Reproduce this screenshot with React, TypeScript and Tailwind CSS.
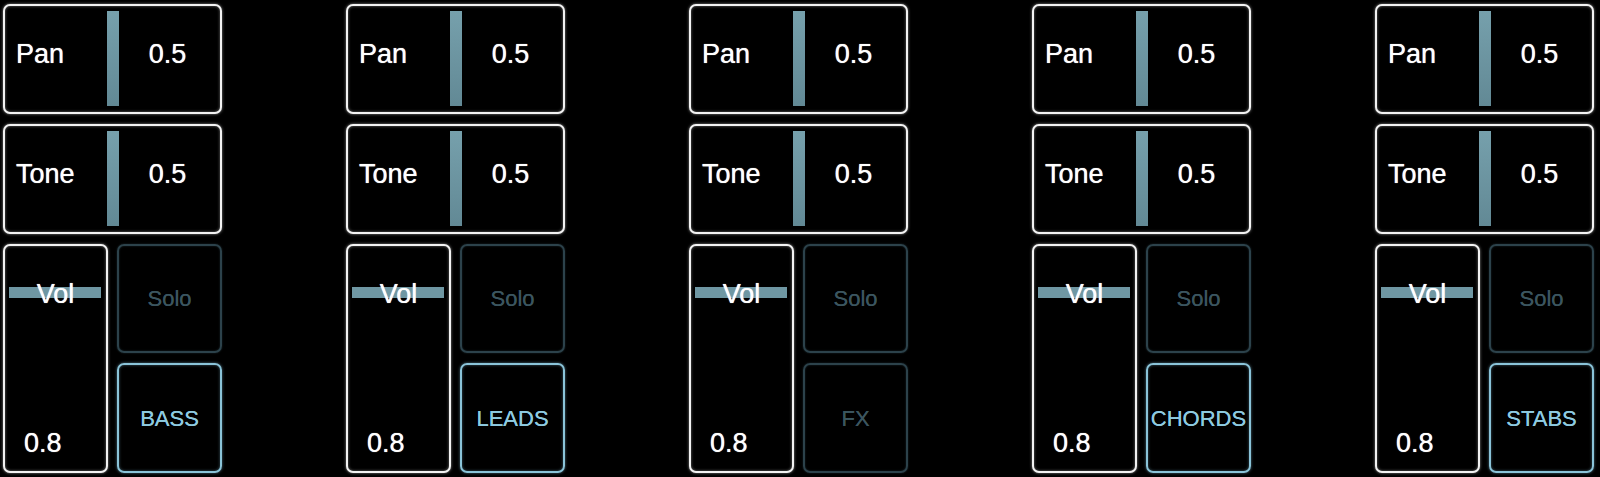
import React from "react";

const font = { fontFamily: '"Liberation Sans", Arial, sans-serif' };

type Ch = { name: string; active: boolean };

const channels: Ch[] = [
  { name: "BASS", active: true },
  { name: "LEADS", active: true },
  { name: "FX", active: false },
  { name: "CHORDS", active: true },
  { name: "STABS", active: true },
];

const whiteBox =
  "relative rounded-[7px] border-2 border-[#f2f2f2] bg-black shadow-[0_0_3px_rgba(255,255,255,0.55),inset_0_0_3px_rgba(255,255,255,0.45)]";

const thick = "[text-shadow:0_0_0.8px_currentColor]";

const dimBtn =
  "flex items-center justify-center rounded-[7px] border-2 border-[#2c424b] text-[22px] text-[#3b555f] shadow-[0_0_2px_rgba(60,90,100,0.5),inset_0_0_2px_rgba(60,90,100,0.5)] [text-shadow:0_0_0.6px_currentColor]";

const litBtn =
  "flex items-center justify-center rounded-[7px] border-2 border-[#8ac3d8] text-[22px] text-[#8dcae0] shadow-[0_0_3px_rgba(140,200,225,0.55),inset_0_0_3px_rgba(140,200,225,0.45)] [text-shadow:0_0_0.6px_currentColor]";

function Knob({ label }: { label: string }) {
  return (
    <div className={`${whiteBox} flex h-[110px] w-[219px] items-stretch`}>
      <div className={`flex w-[102px] items-center pb-[10px] pl-[11px] text-[27px] text-white ${thick}`}>
        {label}
      </div>
      <div className="mb-[6px] mt-[5px] w-[12px] bg-gradient-to-b from-[#76a0ac] to-[#628995] shadow-[0_1px_1px_rgba(0,0,0,0.6)]" />
      <div className={`flex flex-1 items-center justify-center pb-[10px] pr-[4px] text-[27px] text-white ${thick}`}>
        0.5
      </div>
    </div>
  );
}

function Column({ ch }: { ch: Ch }) {
  return (
    <div className="flex w-[219px] shrink-0 flex-col gap-[10px]">
      <Knob label="Pan" />
      <Knob label="Tone" />
      <div className="flex h-[229px] gap-[9px]">
        <div className={`${whiteBox} flex w-[105px] flex-col justify-end pb-[14px] pl-[19px]`}>
          <div className="absolute left-[4px] right-[5px] top-[41px] h-[11px] bg-[#6f97a3]" />
          <div className={`absolute left-0 right-0 top-[35px] text-center text-[27px] leading-[27px] text-white ${thick}`}>
            Vol
          </div>
          <div className={`text-[27px] leading-[27px] text-white ${thick}`}>0.8</div>
        </div>
        <div className="flex w-[105px] flex-col gap-[10px]">
          <div className={`${dimBtn} h-[109px]`}>Solo</div>
          <div className={`${ch.active ? litBtn : dimBtn} h-[110px]`}>{ch.name}</div>
        </div>
      </div>
    </div>
  );
}

export default function App() {
  return (
    <div style={font} className="h-[477px] w-[1600px] overflow-hidden bg-black">
      <div className="flex gap-[124px] pl-[3px] pt-[4px]">
        {channels.map((c) => (
          <Column key={c.name} ch={c} />
        ))}
      </div>
    </div>
  );
}
